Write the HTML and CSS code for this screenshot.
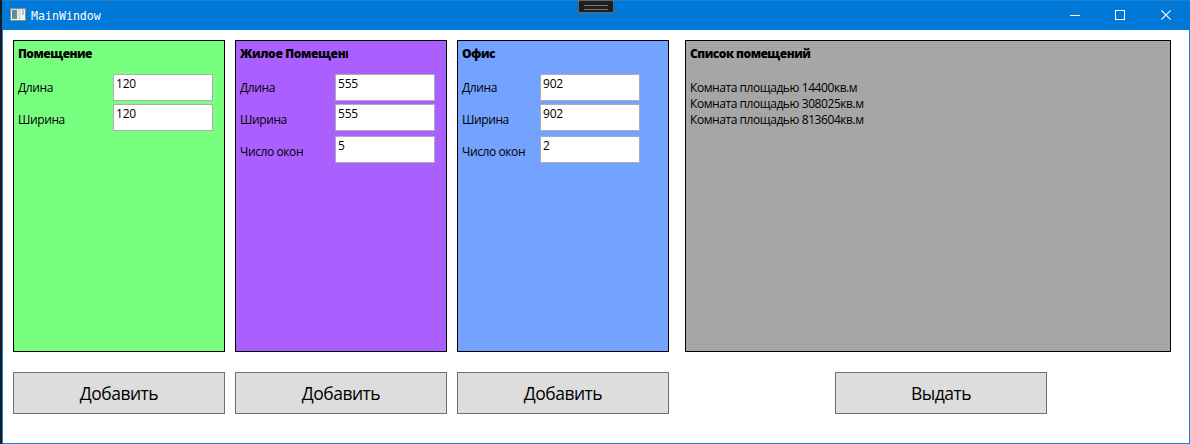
FILE: index.html
```
<!DOCTYPE html>
<html lang="ru">
<head>
<meta charset="utf-8">
<title>MainWindow</title>
<link rel="stylesheet" href="styles.css">
</head>
<body>
<div class="window">
  <header class="titlebar">
    <svg class="app-icon" width="16" height="13" viewBox="0 0 16 13">
      <defs><linearGradient id="pane" x1="0" y1="0" x2="1" y2="1"><stop offset="0" stop-color="#4a86b8"/><stop offset="1" stop-color="#55a672"/></linearGradient></defs>
      <rect x="0.5" y="0.5" width="15" height="12" fill="#f2f2f0" stroke="#8b8f90"/>
      <rect x="1" y="1" width="14" height="1" fill="#d5d8d8"/>
      <rect x="2" y="2" width="5" height="9" fill="url(#pane)"/>
      <rect x="8" y="2" width="3" height="9" fill="#d9dddd"/>
      <rect x="12" y="2" width="2" height="5" fill="#a9c9c0"/>
    </svg>
    <span class="window-title">MainWindow</span>
    <div class="debug-handle"></div>
    <div class="controls">
      <svg width="46" height="30" viewBox="0 0 46 30"><path d="M18 15.5h10" stroke="#fff"/></svg>
      <svg width="46" height="30" viewBox="0 0 46 30"><rect x="17.5" y="10.5" width="9" height="9" fill="none" stroke="#fff"/></svg>
      <svg width="46" height="30" viewBox="0 0 46 30"><path d="M17.3 10.3l9.4 9.4M26.7 10.3l-9.4 9.4" stroke="#fff" stroke-width="1.1"/></svg>
    </div>
  </header>
  <main class="content">
    <section class="column">
      <div class="panel room">
        <h2 class="heading">Помещение</h2>
        <div class="field"><label>Длина</label><input value="120"></div>
        <div class="field"><label>Ширина</label><input value="120"></div>
      </div>
      <button class="action">Добавить</button>
    </section>
    <section class="column">
      <div class="panel living">
        <h2 class="heading">Жилое Помещение</h2>
        <div class="field"><label>Длина</label><input value="555"></div>
        <div class="field"><label>Ширина</label><input value="555"></div>
        <div class="field"><label>Число окон</label><input value="5"></div>
      </div>
      <button class="action">Добавить</button>
    </section>
    <section class="column">
      <div class="panel office">
        <h2 class="heading">Офис</h2>
        <div class="field"><label>Длина</label><input value="902"></div>
        <div class="field"><label>Ширина</label><input value="902"></div>
        <div class="field"><label>Число окон</label><input value="2"></div>
      </div>
      <button class="action">Добавить</button>
    </section>
    <section class="column results">
      <div class="panel list">
        <h2 class="heading list-heading">Список помещений</h2>
        <ul class="rooms">
          <li>Комната площадью 14400кв.м</li>
          <li>Комната площадью 308025кв.м</li>
          <li>Комната площадью 813604кв.м</li>
        </ul>
      </div>
      <button class="action issue">Выдать</button>
    </section>
  </main>
</div>
</body>
</html>
```
FILE: styles.css
```
* { box-sizing: border-box; }
body {
  margin: 0;
  height: 444px;
  padding-left: 2px;
  overflow: hidden;
  background: #161b22;
  font: 12px/16px "Open Sans", "Noto Sans", sans-serif;
  color: #000;
}
.window {
  height: 444px;
  background: #fff;
  border: 1px solid #1a80d2;
  border-top: 0;
}
.titlebar {
  position: relative;
  display: flex;
  align-items: center;
  height: 30px;
  margin: 0 -1px;
  padding-left: 8px;
  background: #0078d7;
  border-top: 1px solid #1a80d2;
}
.app-icon { flex: none; margin-top: -2px; }
.window-title {
  margin-left: 5px;
  color: #fff;
  font: 11.6px/16px "DejaVu Sans Mono", monospace;
}
.debug-handle {
  position: absolute;
  left: 576px;
  top: -1px;
  width: 36px;
  height: 13px;
  padding: 4px 5px;
  background: #1f1f1f;
  border: 1px solid #686868;
}
.debug-handle::before {
  content: "";
  display: block;
  height: 3px;
  border-top: 1px solid #777;
  border-bottom: 1px solid #777;
}
.controls { display: flex; height: 30px; margin: -1px 0 0 auto; }
.content { display: flex; gap: 10px; padding: 10px 0 0 10px; }
.column { width: 212px; display: flex; flex-direction: column; gap: 20px; }
.results { width: 486px; margin-left: 6px; }
.panel { height: 312px; border: 1px solid #000; padding: 5px 4px; }
.room { background: #78ff80; }
.living { background: #aa5fff; }
.office { background: #74a2ff; }
.list { background: #a6a6a6; }
.heading {
  width: 108px;
  margin: 0 0 10px;
  overflow: hidden;
  white-space: nowrap;
  font-size: 12px;
  line-height: 16px;
  font-weight: 800;
  letter-spacing: -0.5px;
}
.living .heading { letter-spacing: -0.35px; }
.list-heading { width: auto; margin-bottom: 18px; }
.field { display: flex; height: 32px; }
.field label { width: 95px; line-height: 32px; letter-spacing: -0.4px; }
.office .field label { width: 78px; }
.field input {
  width: 100px;
  height: 27px;
  margin: 0;
  padding: 0 2px 8px;
  border: 1px solid #abadb3;
  border-radius: 0;
  background: #fff;
  font: inherit;
  letter-spacing: -0.2px;
}
.field:nth-of-type(1) input { margin-top: 2px; }
.rooms { margin: 0; padding: 0; list-style: none; letter-spacing: -0.43px; }
.action {
  height: 42px;
  padding: 0;
  border: 1px solid #707070;
  border-radius: 0;
  background: #ddd;
  color: #000;
  font: 17.5px/24px "Open Sans", "Noto Sans", sans-serif;
  letter-spacing: -0.5px;
}
.issue { width: 212px; margin-left: 150px; }
```
